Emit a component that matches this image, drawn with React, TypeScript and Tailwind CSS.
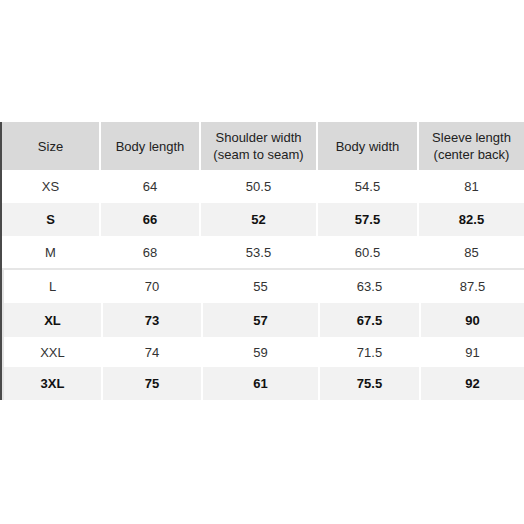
import React from 'react';

type Row = { size: string; vals: string[]; bold?: boolean; h: string };

const upper: Row[] = [
  { size: 'XS', vals: ['64', '50.5', '54.5', '81'], h: 'h-[33px]' },
  { size: 'S', vals: ['66', '52', '57.5', '82.5'], bold: true, h: 'h-[33px]' },
  { size: 'M', vals: ['68', '53.5', '60.5', '85'], h: 'h-[32px]' },
];

const lower: Row[] = [
  { size: 'L', vals: ['70', '55', '63.5', '87.5'], h: 'h-[33px]' },
  { size: 'XL', vals: ['73', '57', '67.5', '90'], bold: true, h: 'h-[34px]' },
  { size: 'XXL', vals: ['74', '59', '71.5', '91'], h: 'h-[30px]' },
  { size: '3XL', vals: ['75', '61', '75.5', '92'], bold: true, h: 'h-[33px]' },
];

const headers = [
  ['Size'],
  ['Body length'],
  ['Shoulder width', '(seam to seam)'],
  ['Body width'],
  ['Sleeve length', '(center back)'],
];

const TableRows = ({ rows, cols }: { rows: Row[]; cols: string }) => (
  <>
    {rows.map((r) => (
      <div key={r.size} className={`grid ${cols} gap-x-[2px] ${r.h}`}>
        {[r.size, ...r.vals].map((v, i) => (
          <div
            key={i}
            className={`flex items-center justify-center ${
              r.bold ? 'bg-[#f2f2f2] font-bold text-[#111]' : 'bg-white text-[#333]'
            }`}
          >
            {v}
          </div>
        ))}
      </div>
    ))}
  </>
);

export default function App() {
  return (
    <div
      className="w-[524px] h-[524px] bg-white pt-[122px] text-[13px] leading-[17px]"
      style={{ fontFamily: '"Liberation Sans", Arial, sans-serif' }}
    >
      <div className="flex">
        <div className="w-[2px] h-[278px] bg-[#4a4a4a]" />
        <div className="flex-1 flex flex-col">
          <div className="grid grid-cols-[97px_98px_115px_99px_1fr] gap-x-[2px] h-[48px]">
            {headers.map((h, i) => (
              <div
                key={i}
                className="bg-[#d9d9d9] flex flex-col items-center justify-center text-[#222]"
              >
                {h.map((line) => (
                  <span key={line}>{line}</span>
                ))}
              </div>
            ))}
          </div>
          <TableRows rows={upper} cols="grid-cols-[97px_98px_115px_99px_1fr]" />
          <div className="h-[2px] bg-[#e6e6e6]" />
          <div className="flex">
            <div className="w-[2px] bg-[#e4e4e4]" />
            <div className="flex-1 flex flex-col">
              <TableRows rows={lower} cols="grid-cols-[97px_98px_115px_99px_1fr]" />
            </div>
          </div>
        </div>
      </div>
    </div>
  );
}
